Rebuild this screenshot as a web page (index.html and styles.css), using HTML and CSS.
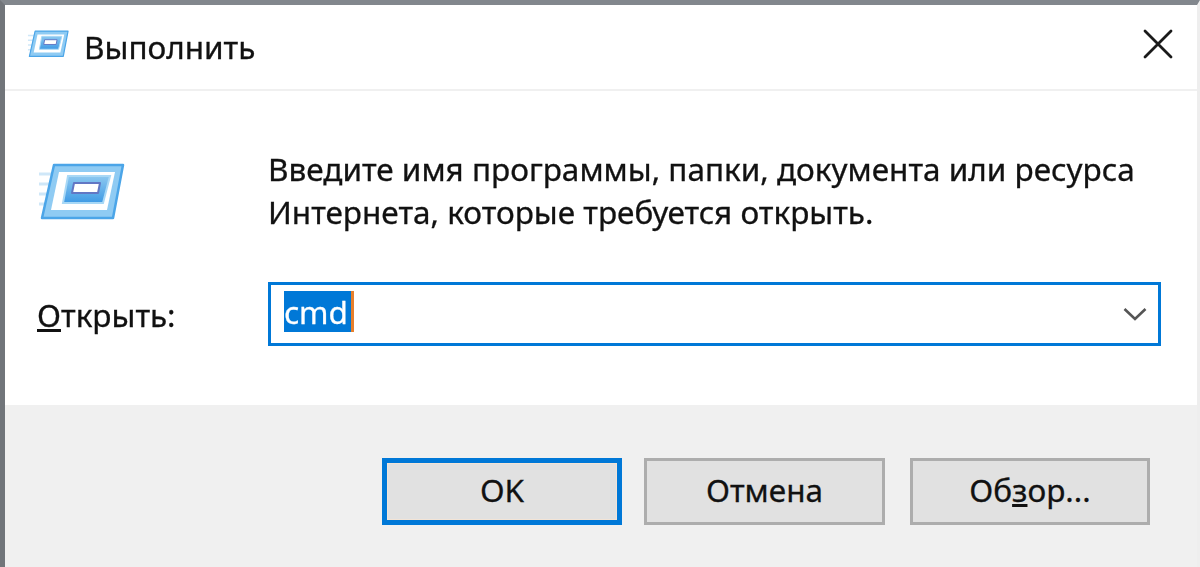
FILE: index.html
```html
<!DOCTYPE html>
<html lang="ru">
<head>
    <meta charset="UTF-8">
    <title>Выполнить</title>
    <link rel="stylesheet" href="styles.css">
</head>
<body>
<div class="dialog">
    <div class="title-bar">
        <svg class="title-icon" viewBox="0 0 88 58">
            <use href="#run-icon"></use>
        </svg>
        <span class="title-text">Выполнить</span>
        <svg class="close-icon" viewBox="0 0 30 30">
            <path d="M2 2 L28 28 M28 2 L2 28" stroke="#1a1a1a" stroke-width="2.8" stroke-linecap="round" fill="none"/>
        </svg>
    </div>
    <div class="content">
        <div class="intro">
            <div class="icon-cell">
                <svg class="run-icon" viewBox="0 0 88 58">
                    <defs>
                        <linearGradient id="run-inner" x1="0" y1="0" x2="0" y2="1">
                            <stop offset="0" stop-color="#8cc8f0"/>
                            <stop offset="1" stop-color="#3f9ae4"/>
                        </linearGradient>
                        <g id="run-icon">
                            <path d="M2 11 H20 M2 21 H16 M2 31 H14 M2 41 H12" stroke="#cfe7f8" stroke-width="3" fill="none"/>
                            <path d="M17 2 H86 L76 55 H5 Z" fill="#8fcbf3" stroke="#4ba5e8" stroke-width="2.5" stroke-linejoin="round"/>
                            <path d="M22 9 H78 L70 47 H14 Z" fill="#ffffff"/>
                            <path d="M31 13 H73 L66 40 H26 Z" fill="url(#run-inner)" stroke="#a8d8f6" stroke-width="2"/>
                            <path d="M37 20 H63 L61 30 H35 Z" fill="#ffffff" stroke="#6277c4" stroke-width="2" stroke-linejoin="round"/>
                        </g>
                    </defs>
                    <use href="#run-icon"></use>
                </svg>
            </div>
            <p class="intro-text">Введите имя программы, папки, документа или ресурса<br>Интернета, которые требуется открыть.</p>
        </div>
        <div class="open-row">
            <label class="open-label" for="cmd"><u>О</u>ткрыть:</label>
            <div class="combo" id="cmd">
                <span class="selected">cmd</span>
                <svg class="chevron" viewBox="0 0 24 14">
                    <path d="M1.5 2 L12 12 L22.5 2" stroke="#555" stroke-width="2.6" fill="none"/>
                </svg>
            </div>
        </div>
    </div>
    <div class="footer">
        <button class="btn btn-default">OK</button>
        <button class="btn btn-cancel">Отмена</button>
        <button class="btn btn-browse">Об<u>з</u>ор...</button>
    </div>
</div>
</body>
</html>
```

FILE: styles.css
```css
* {
    margin: 0;
    padding: 0;
    box-sizing: border-box;
    font-family: "Noto Sans", "Open Sans", sans-serif;
}

body {
    width: 1200px;
    height: 567px;
    overflow: hidden;
    background: #fff;
}

.dialog {
    height: 567px;
    display: flex;
    flex-direction: column;
    border-top: 5px solid #82878d;
    border-left: 5px solid #71757a;
    border-right: 3px solid #eeeeee;
    color: #111;
    -webkit-text-stroke: 0.3px currentColor;
    filter: blur(0.5px);
}

.title-bar {
    height: 86px;
    flex: none;
    display: flex;
    align-items: center;
    padding: 0 24px 0 22px;
    border-bottom: 2px solid #f0f0f0;
}

.title-icon {
    width: 42px;
    height: 28px;
    margin: 0 15px 7px 0;
}

.title-text {
    font-size: 31.5px;
    flex: 1;
    margin-bottom: 2px;
}

.close-icon {
    width: 30px;
    height: 30px;
    margin-bottom: 7px;
}

.content {
    flex: 1;
    display: flex;
    flex-direction: column;
    padding: 0 36px 0 32px;
}

.intro {
    display: flex;
    padding-top: 56px;
    height: 191px;
}

.icon-cell {
    width: 231px;
    flex: none;
    padding-top: 16px;
}

.run-icon {
    width: 88px;
    height: 58px;
    display: block;
}

.intro-text {
    font-size: 31.5px;
    line-height: 43px;
    white-space: nowrap;
}

.open-row {
    display: flex;
    align-items: center;
}

.open-label {
    width: 231px;
    flex: none;
    font-size: 31.5px;
}

.combo {
    flex: 1;
    height: 64px;
    border: 3px solid #0078d7;
    display: flex;
    align-items: center;
    justify-content: space-between;
    padding: 0 11px 0 13px;
}

.selected {
    font-size: 31.5px;
    line-height: 41px;
    padding-right: 3px;
    margin-bottom: 5px;
    background: #0078d7;
    color: #fff;
    border-right: 3px solid #e8802c;
}

.chevron {
    width: 24px;
    height: 14px;
}

.footer {
    height: 162px;
    flex: none;
    background: #f0f0f0;
    display: flex;
    justify-content: flex-end;
    gap: 22px;
    padding: 53px 47px 0 0;
}

.btn {
    width: 240px;
    height: 67px;
    background: #e1e1e1;
    border: 3px solid #adadad;
    font-size: 31.5px;
    color: #111;
    padding-bottom: 4px;
}

.btn-cancel {
    width: 241px;
}

.btn-browse {
    margin-left: 3px;
}

.btn-default {
    border: 5px solid #0078d7;
    box-shadow: inset 0 0 0 1px #f3e4d6;
}
```
